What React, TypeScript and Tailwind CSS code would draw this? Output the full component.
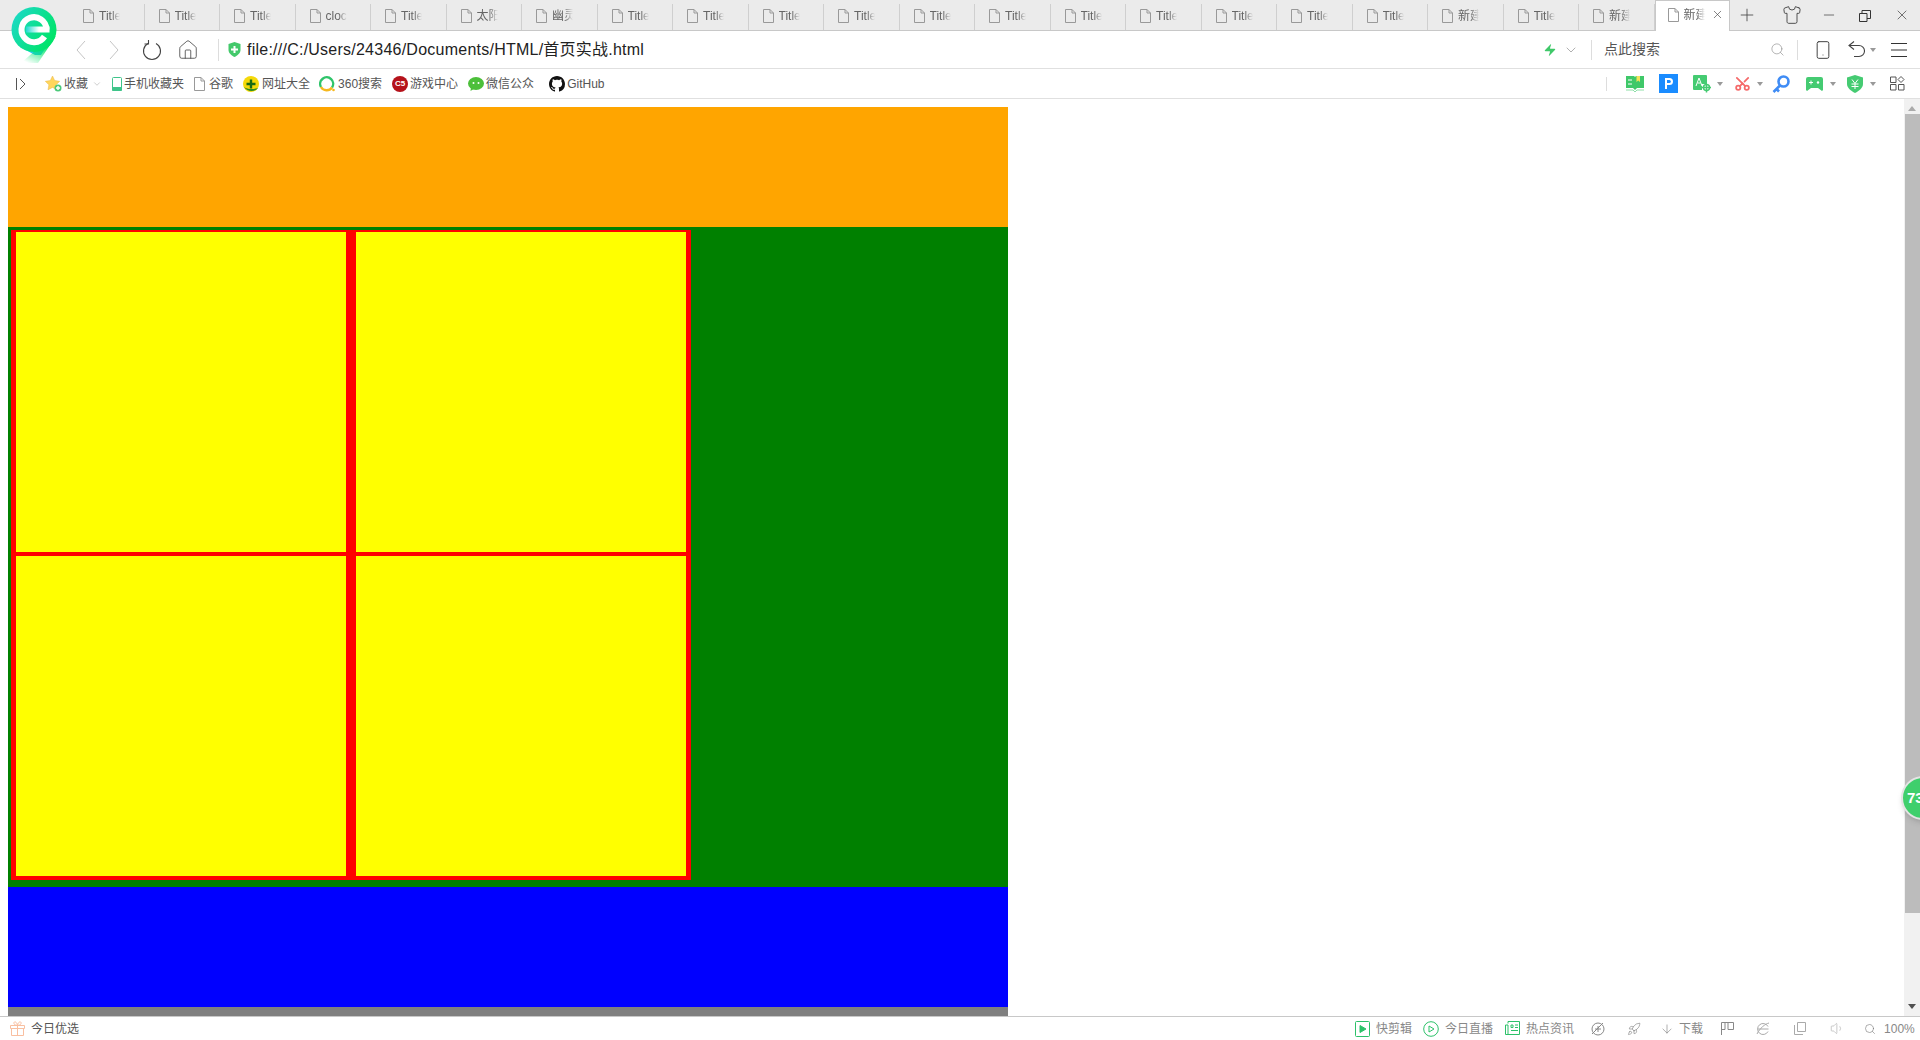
import {
  ChevronDown,
  Home,
  Shirt,
  Minus,
  X,
  Plus,
  Search,
  Smartphone,
  Zap,
  Rocket,
  ArrowDown,
  Volume1,
  Scissors,
} from "lucide-react";

const tabs = [
  "Title", "Title", "Title", "clock", "Title", "太阳系", "幽灵按",
  "Title", "Title", "Title", "Title", "Title", "Title", "Title", "Title", "Title", "Title", "Title",
  "新建文", "Title", "新建文",
];

const DocIcon = ({ className = "" }: { className?: string }) => (
  <svg width="11" height="14" viewBox="0 0 11 14" className={className} fill="none" stroke="#999">
    <path d="M.5.5h6.5l3.5 3.5v9.500h-10z" />
    <path d="M7 .5v3.500h3.500" />
  </svg>
);

const Caret = ({ className = "" }: { className?: string }) => (
  <svg width="6" height="4" viewBox="0 0 6 4" className={className}>
    <path d="M0 0h6L3 4z" fill="#999" />
  </svg>
);

const Tab = ({ label }: { label: string }) => (
  <div className="w-[75.5px] shrink-0 h-[26px] mt-1 border-r border-[#cfcfcf] flex items-center pl-[14px] pb-[3px]">
    <DocIcon />
    <span className="ml-[5px] w-[21px] overflow-hidden whitespace-nowrap text-xs text-[#666] [mask-image:linear-gradient(to_right,black_60%,transparent)]">
      {label}
    </span>
  </div>
);

const Logo = () => (
  <svg width="48" height="58" viewBox="0 0 48 58" className="absolute left-[11px] top-[6px]">
    <defs>
      <linearGradient id="ring" x1="0" y1="0" x2="1" y2="0.6">
        <stop offset="0" stopColor="#20d8d0" />
        <stop offset="1" stopColor="#00e468" />
      </linearGradient>
      <linearGradient id="tail" x1="0.8" y1="0" x2="0.2" y2="1">
        <stop offset="0.3" stopColor="#00e468" />
        <stop offset="1" stopColor="#00e468" stopOpacity="0" />
      </linearGradient>
      <linearGradient id="bar" gradientUnits="userSpaceOnUse" x1="15" y1="0" x2="28" y2="0">
        <stop offset="0" stopColor="#20d8d0" />
        <stop offset="1" stopColor="#ffffff" />
      </linearGradient>
    </defs>
    <path d="M9 41l15 8h6l8-12z" fill="#2bc8f0" />
    <path d="M45 30L27 57H10l16-14z" fill="url(#tail)" />
    <circle cx="23" cy="23.500" r="22.500" fill="url(#ring)" />
    <path d="M33.500 30.500A12.500 12.500 0 1 1 35.500 23.500" fill="none" stroke="#fff" strokeWidth="6" />
    <rect x="15" y="20.500" width="23.500" height="6" fill="url(#bar)" />
  </svg>
);

const Bookmark = ({
  icon,
  label,
  className = "",
}: {
  icon: React.ReactNode;
  label: string;
  className?: string;
}) => (
  <div className={`flex items-center ${className}`}>
    {icon}
    <span className="text-xs text-[#555] ml-[2px] whitespace-nowrap">{label}</span>
  </div>
);

const StatusItem = ({
  icon,
  label,
  className = "",
}: {
  icon: React.ReactNode;
  label?: string;
  className?: string;
}) => (
  <div className={`flex items-center ${className}`}>
    {icon}
    {label && <span className="ml-[6px] text-xs text-[#888] whitespace-nowrap">{label}</span>}
  </div>
);

const TabBar = () => (
  <div className="h-[31px] shrink-0 bg-[#ebebeb] border-b border-[#c8c8c8] flex pl-[69px] relative">
    {tabs.map((t, i) => (
      <Tab key={i} label={t} />
    ))}
    <div className="w-[75px] h-[31px] shrink-0 bg-white border-x border-t border-[#c8c8c8] flex items-center pl-[12px] pb-[3px]">
      <DocIcon />
      <span className="ml-[5px] w-[21px] overflow-hidden whitespace-nowrap text-xs text-[#666] [mask-image:linear-gradient(to_right,black_60%,transparent)]">
        新建文
      </span>
      <X size={13} strokeWidth={1.2} className="ml-[6px] text-[#444]" />
    </div>
    <Plus size={20} strokeWidth={1} className="mt-[5px] ml-[7px] text-[#444]" />
    <Shirt size={20} strokeWidth={1} className="mt-[5px] ml-[25px] text-[#333]" />
    <Minus size={16} strokeWidth={1} className="mt-[7px] ml-[19px] text-[#333]" />
    <svg width="12" height="12" viewBox="0 0 12 12" className="mt-[10px] ml-[22px]" fill="none" stroke="#333">
      <path d="M.5 3.500h7.500v8H.5zM3 3.500V.5h8.500v8H8" />
    </svg>
    <X size={16} strokeWidth={1} className="mt-[7px] ml-[23px] text-[#333]" />
  </div>
);

const AddressBar = () => (
  <div className="h-[38px] shrink-0 bg-white border-b border-[#e0e0e0] flex items-center">
    <svg width="10" height="18" viewBox="0 0 10 18" className="ml-[76px]" fill="none" stroke="#c4c4c4">
      <path d="M9 0L1 9l8 9" />
    </svg>
    <svg width="10" height="18" viewBox="0 0 10 18" className="ml-[23px]" fill="none" stroke="#c4c4c4">
      <path d="M1 0l8 9-8 9" />
    </svg>
    <svg width="20" height="22" viewBox="0 0 20 22" className="ml-[23px]" fill="none" stroke="#444" strokeWidth="1.100">
      <path d="M6 4.500a8.500 8.500 0 1 0 8 0" />
      <path d="M6.500 1v4H2.500" />
    </svg>
    <Home size={22} strokeWidth={0.9} className="ml-[15px] text-[#444]" />
    <div className="w-px h-[22px] bg-[#ddd] ml-[19px]" />
    <svg width="13" height="15" viewBox="0 0 13 15" className="ml-[9px]">
      <path d="M6.500 0l6 2v6c0 3-3 5.500-6 7-3-1.500-6-4-6-7V2z" fill="#43c96b" />
      <path d="M5.500 4h2v2.500H10v2H7.500V11h-2V8.500H3v-2h2.500z" fill="#fff" />
    </svg>
    <span className="ml-[6px] text-[16px] tracking-[0.24px] text-[#222] whitespace-nowrap w-[1296px]">
      file:///C:/Users/24346/Documents/HTML/首页实战.html
    </span>
    <Zap size={14} fill="#3fc869" strokeWidth={0} />
    <ChevronDown size={16} strokeWidth={1} className="ml-[6px] text-[#888]" />
    <div className="w-px h-5 bg-[#ddd] ml-[12px]" />
    <span className="ml-[12px] text-[14px] text-[#555] w-[166px]">点此搜索</span>
    <Search size={15} strokeWidth={1} className="text-[#888]" />
    <div className="w-px h-5 bg-[#ddd] ml-[12px]" />
    <Smartphone size={20} strokeWidth={1.2} className="ml-[15px] text-[#444]" />
    <svg width="17" height="17" viewBox="0 0 17 17" className="ml-[15px]" fill="none" stroke="#444" strokeWidth="1.100">
      <path d="M6 .5L1 4.500l5 4M1 4.500h10a5.500 5.500 0 0 1 0 11H6" />
    </svg>
    <Caret className="ml-[5px]" />
    <svg width="16" height="14" viewBox="0 0 16 14" className="ml-[15px]" stroke="#333">
      <path d="M0 .5h16M0 7h16M0 13.500h16" />
    </svg>
  </div>
);

const BookmarkBar = () => (
  <div className="h-[30px] shrink-0 bg-white border-b border-[#e0e0e0] flex items-center">
    <svg width="10" height="12" viewBox="0 0 10 12" className="ml-[16px]" fill="none" stroke="#555">
      <path d="M.5 0v12M4 1l5 5-5 5" />
    </svg>
    <Bookmark
      className="ml-[19px]"
      label="收藏"
      icon={
        <svg width="17" height="17" viewBox="0 0 17 17">
          <path d="M7.500 1l2.200 4.600 5 .7-3.600 3.500.9 5-4.500-2.400L3 14.800l.9-5L.3 6.300l5-.7z" fill="#ffd65c" stroke="#e8b64a" strokeWidth=".5" />
          <circle cx="13" cy="13" r="3.500" fill="#4cc97a" />
          <path d="M12.300 11h1.400v1.300H15v1.400h-1.300V15h-1.400v-1.300H11v-1.400h1.300z" fill="#fff" />
        </svg>
      }
    />
    <ChevronDown size={10} strokeWidth={1} className="ml-[4px] text-[#888]" />
    <Bookmark
      className="ml-[10px]"
      label="手机收藏夹"
      icon={
        <svg width="10" height="14" viewBox="0 0 10 14" fill="none">
          <rect x=".5" y=".5" width="9" height="13" rx="1" stroke="#3fc48a" />
          <path d="M0 10h10v3a1 1 0 0 1-1 1H1a1 1 0 0 1-1-1z" fill="#3fc48a" />
        </svg>
      }
    />
    <Bookmark className="ml-[10px]" label="谷歌" icon={<DocIcon className="mr-[2px]" />} />
    <Bookmark
      className="ml-[10px]"
      label="网址大全"
      icon={
        <svg width="16" height="16" viewBox="0 0 16 16" className="mr-[1px]">
          <circle cx="8" cy="8" r="8" fill="#f5d90a" />
          <path d="M1 11c2 4 10 6 14 1-4 1-10 2-14-1z" fill="#2d8c1f" />
          <path d="M6.800 3.500h2.400v3.300h3.300v2.400H9.200v3.300H6.800V9.200H3.500V6.800h3.300z" fill="#1a6a14" />
        </svg>
      }
    />
    <Bookmark
      className="ml-[9px]"
      label="360搜索"
      icon={
        <svg width="16" height="16" viewBox="0 0 16 16" fill="none" strokeWidth="2.400" className="mr-[1px]">
          <path d="M2 11a6.500 6.500 0 1 1 11 .5" stroke="#2fc46a" />
          <path d="M2 11a6.500 6.500 0 0 0 11 .5" stroke="#f6b81e" />
          <circle cx="14.500" cy="14" r="1.300" fill="#f6b81e" stroke="none" />
        </svg>
      }
    />
    <Bookmark
      className="ml-[10px]"
      label="游戏中心"
      icon={
        <span className="w-4 h-4 rounded-full bg-[#b5121b] text-white text-[8px] font-bold leading-4 text-center">C5</span>
      }
    />
    <Bookmark
      className="ml-[10px]"
      label="微信公众"
      icon={
        <svg width="16" height="14" viewBox="0 0 16 14">
          <ellipse cx="8" cy="6.500" rx="8" ry="6.500" fill="#4cbf3a" />
          <path d="M3 10l-.5 4 4-2.500z" fill="#4cbf3a" />
          <circle cx="5.500" cy="6" r="1" fill="#fff" />
          <circle cx="10.500" cy="6" r="1" fill="#fff" />
        </svg>
      }
    />
    <Bookmark
      className="ml-[15px]"
      label="GitHub"
      icon={
        <svg width="16" height="16" viewBox="0 0 16 16">
          <path
            fill="#111"
            d="M8 0C3.580 0 0 3.580 0 8c0 3.540 2.290 6.530 5.470 7.590.4.070.55-.17.55-.38 0-.19-.01-.82-.01-1.490-2.010.37-2.530-.49-2.690-.94-.09-.23-.48-.94-.82-1.130-.28-.15-.68-.52-.01-.53.63-.01 1.080.58 1.230.82.720 1.210 1.870.87 2.330.66.070-.52.280-.87.510-1.070-1.780-.2-3.640-.89-3.640-3.950 0-.87.310-1.590.820-2.150-.08-.2-.360-1.020.08-2.120 0 0 .67-.21 2.200.82.640-.18 1.320-.27 2-.27s1.360.09 2 .27c1.530-1.040 2.200-.82 2.200-.82.440 1.100.160 1.920.080 2.120.51.560.82 1.270.82 2.150 0 3.070-1.870 3.750-3.650 3.950.29.250.54.730.54 1.480 0 1.070-.01 1.930-.01 2.200 0 .21.150.46.550.38A8.010 8.010 0 0 0 16 8c0-4.420-3.580-8-8-8z"
          />
        </svg>
      }
    />
    <div className="w-px h-[14px] bg-[#ddd] ml-[1002px]" />
    <svg width="18" height="17" viewBox="0 0 18 17" className="ml-[19px]">
      <path d="M0 1h8l1 1 1-1h8v12h-7l-2 2-2-2H0z" fill="#3fc869" />
      <path d="M10.500 1h3.500v6l-1.750-1.500L10.500 7z" fill="#f3e25a" />
      <path d="M2 5h4M2 9h4" stroke="#fff" />
      <path d="M0 15h7l2 2 2-2h7" stroke="#8de0a8" fill="none" />
    </svg>
    <svg width="19" height="19" viewBox="0 0 19 19" className="ml-[15px]">
      <rect width="19" height="19" fill="#1a8cff" />
      <path d="M6 15V4h4.500a3.500 3.500 0 0 1 0 7H8v4z" fill="#fff" />
      <path d="M8 6v3h2.300a1.500 1.500 0 0 0 0-3z" fill="#1a8cff" />
    </svg>
    <svg width="18" height="18" viewBox="0 0 18 18" className="ml-[15px]">
      <path d="M1 0h12a1 1 0 0 1 1 1v8H9v6H1a1 1 0 0 1-1-1V1a1 1 0 0 1 1-1z" fill="#45cb72" />
      <path d="M3 11l3-8 3 8M4.500 8h3" stroke="#fff" fill="none" />
      <circle cx="13.500" cy="12.500" r="3" fill="none" stroke="#45cb72" strokeWidth="1.500" />
      <path d="M9 12.500h9M13.500 10v7.500" stroke="#45cb72" strokeWidth="1.500" />
    </svg>
    <Caret className="ml-[6px]" />
    <Scissors size={17} strokeWidth={2.500} className="ml-[11px] text-[#f56a6a] -rotate-90" />
    <Caret className="ml-[6px]" />
    <svg width="18" height="18" viewBox="0 0 18 18" className="ml-[9px]" fill="none" stroke="#3f8cf5" strokeWidth="2.600">
      <circle cx="11.500" cy="6.500" r="5" />
      <path d="M8 10.500l-6.500 6.500M4.500 14l2.500 2.500" />
    </svg>
    <svg width="17" height="14" viewBox="0 0 17 14" className="ml-[16px]">
      <path d="M2 0h13a2 2 0 0 1 2 2v11l-1 1-4-3H5l-4 3-1-1V2a2 2 0 0 1 2-2z" fill="#45cb72" />
      <path d="M3 5.500h4M5 3.500v4" stroke="#fff" />
      <circle cx="12" cy="5.500" r="1.200" fill="#fff" />
    </svg>
    <Caret className="ml-[7px]" />
    <svg width="16" height="18" viewBox="0 0 16 18" className="ml-[11px]">
      <path d="M8 0l8 2.500V9c0 4-4 7-8 9-4-2-8-5-8-9V2.500z" fill="#45cb72" />
      <path d="M5 4.500l3 4 3-4M4.500 9h7M4.500 11.500h7M8 8.500V14" stroke="#fff" fill="none" />
    </svg>
    <Caret className="ml-[7px]" />
    <svg width="15" height="15" viewBox="0 0 15 15" className="ml-[14px]" fill="none" stroke="#555">
      <path d="M.5 1h5.500v5.500H.5zM.5 8.500h5.500V14H.5zM8.500 8.500H14V14H8.500z" />
      <path d="M11 .5l3 3-3 3-3-3z" />
    </svg>
  </div>
);

const PageContent = () => (
  <div className="flex-1 min-w-0 bg-white pl-2 pt-2 overflow-hidden">
    <div className="w-[1000px]">
      <div className="h-[120px] bg-[#ffa500]" />
      <div className="h-[660px] bg-[#008000] pt-[3px] pl-[3px]">
        <div className="w-[680px] bg-[#f00] pb-[2px] grid grid-cols-2">
          {[0, 1, 2, 3].map((i) => (
            <div key={i} className="h-[324px] bg-[#ff0] border-x-[5px] border-y-2 border-[#f00]" />
          ))}
        </div>
      </div>
      <div className="h-[120px] bg-[#00f]" />
      <div className="h-[9px] bg-[#808080]" />
    </div>
  </div>
);

const Scrollbar = () => (
  <div className="w-4 shrink-0 bg-[#f1f1f1] flex flex-col items-center">
    <svg width="8" height="5" viewBox="0 0 8 5" className="mt-[7px]">
      <path d="M4 0l4 5H0z" fill="#aaa" />
    </svg>
    <div className="w-[15px] ml-px h-[799px] mt-[3px] bg-[#bcbcbc]" />
    <svg width="8" height="5" viewBox="0 0 8 5" className="mt-[91px]">
      <path d="M0 0h8L4 5z" fill="#505050" />
    </svg>
  </div>
);

const StatusBar = () => (
  <div className="h-6 shrink-0 bg-white border-t border-[#c8c8c8] flex items-center">
    <svg width="15" height="15" viewBox="0 0 15 15" className="ml-[10px]" fill="none" stroke="#f9bfa0">
      <path d="M.5 4.500h14v3H.5zM1.500 7.500h12v7h-12zM7.500 4.500v10" />
      <path d="M7.500 4.500C5 4.500 3.500 3 4 1.500s3-.5 3.500 3c.5-3.500 3-4.500 3.500-3s-1 3-3.500 3z" />
    </svg>
    <span className="ml-[6px] text-xs text-[#555] w-[1324px] whitespace-nowrap">今日优选</span>
    <StatusItem
      label="快剪辑"
      icon={
        <svg width="15" height="16" viewBox="0 0 15 16" fill="none" stroke="#2cc169">
          <rect x=".5" y=".5" width="14" height="15" rx="1" />
          <path d="M5 4.500l6 3.500-6 3.500z" fill="#2cc169" />
        </svg>
      }
    />
    <StatusItem
      className="ml-[11px]"
      label="今日直播"
      icon={
        <svg width="16" height="16" viewBox="0 0 16 16" fill="none" stroke="#2cc169">
          <circle cx="8" cy="8" r="7.300" />
          <path d="M6 5l5 3-5 3z" />
        </svg>
      }
    />
    <StatusItem
      className="ml-[12px]"
      label="热点资讯"
      icon={
        <svg width="15" height="15" viewBox="0 0 15 15" fill="none" stroke="#2cc169">
          <path d="M3 2.500V.5h11.500v13H.5V4H3v9.500" />
          <path d="M6 4h2v2.500H6zM10 4h3M10 6.500h3M6 9.500h7" />
        </svg>
      }
    />
    <StatusItem
      className="ml-[17px]"
      icon={
        <svg width="14" height="14" viewBox="0 0 14 14" fill="none" stroke="#888">
          <circle cx="7" cy="7" r="6" />
          <path d="M7 4v6M4 7h6M1 12L12 1" />
        </svg>
      }
    />
    <Rocket size={14} strokeWidth={1} className="ml-[22px] text-[#777]" />
    <ArrowDown size={14} strokeWidth={1} className="ml-[19px] text-[#777]" />
    <span className="ml-[5px] text-xs text-[#888] whitespace-nowrap">下载</span>
    <svg width="13" height="13" viewBox="0 0 13 13" className="ml-[18px]" fill="none" stroke="#888">
      <path d="M.5 13V.5h12v7H7V.5M4 .5v7H.5" />
    </svg>
    <svg width="14" height="14" viewBox="0 0 14 14" className="ml-[22px]" fill="none" stroke="#aaa">
      <path d="M12 9.500A5.500 5.500 0 1 1 12 4.500M2 7h10.500M1 12C4 6 9 2 13 1" />
    </svg>
    <svg width="12" height="13" viewBox="0 0 12 13" className="ml-[24px]" fill="none" stroke="#aaa">
      <path d="M3.500 9.500V.5h8v9zM.5 3v9.500H9" />
    </svg>
    <Volume1 size={15} strokeWidth={1} className="ml-[24px] text-[#aaa]" />
    <Search size={12} strokeWidth={1.200} className="ml-[19px] text-[#777]" />
    <span className="ml-[8px] text-xs text-[#888] whitespace-nowrap">100%</span>
  </div>
);

export default function App() {
  return (
    <div className="relative w-[1920px] h-[1040px] overflow-hidden bg-white flex flex-col font-['Liberation_Sans','Noto_Sans_CJK_SC',sans-serif]">
      <TabBar />
      <AddressBar />
      <BookmarkBar />
      <div className="flex-1 min-h-0 flex">
        <PageContent />
        <Scrollbar />
      </div>
      <StatusBar />
      <Logo />
      <div className="absolute left-[1901px] top-[776px] w-11 h-11 rounded-full bg-[#3fcf6c] border-2 border-[#e4e4e4] shadow-md flex items-center pl-[4px]">
        <span className="text-[15px] font-bold text-white">73</span>
      </div>
    </div>
  );
}
